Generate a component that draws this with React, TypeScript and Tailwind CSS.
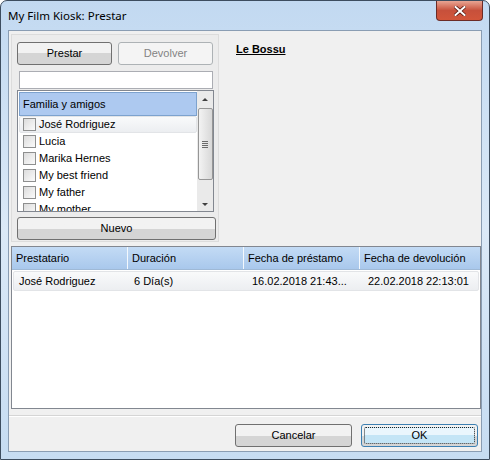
import React from 'react';

const friends = ['José Rodriguez', 'Lucia', 'Marika Hernes', 'My best friend', 'My father', 'My mother'];

const columns = [
  { label: 'Prestatario', w: 'w-[116px]' },
  { label: 'Duración', w: 'w-[116px]' },
  { label: 'Fecha de préstamo', w: 'w-[116px]' },
  { label: 'Fecha de devolución', w: 'flex-1' },
];

// Botón estilo Windows 7
function WinButton({ label, disabled, focused, className }: { label: string; disabled?: boolean; focused?: boolean; className: string }) {
  if (disabled) {
    return (
      <div className={`${className} flex items-center justify-center rounded-[3px] border border-[#adb2b5] bg-[#f4f4f4] text-[#838383]`}>
        {label}
      </div>
    );
  }
  return (
    <div
      className={`${className} flex items-center justify-center rounded-[3px] border ${
        focused ? 'border-[#3c7fb1]' : 'border-[#707070]'
      } bg-gradient-to-b from-[#f2f2f2] from-50% to-[#d5d5d5] to-50% text-black`}
    >
      {focused ? (
        <div className="m-[2px] flex h-[calc(100%-4px)] w-[calc(100%-4px)] items-center justify-center rounded-[2px] border border-dotted border-[#222] bg-gradient-to-b from-[#eaf6fd] from-50% to-[#c4e5f6] to-50%">
          {label}
        </div>
      ) : (
        label
      )}
    </div>
  );
}

function Check() {
  return <div className="h-[13px] w-[13px] shrink-0 border border-[#8e8f8f] bg-gradient-to-br from-[#dcdcdc] to-[#fbfbfb]" />;
}

export default function App() {
  return (
    <div
      className="relative h-[460px] w-[490px] overflow-hidden rounded-t-[7px] border border-[#3d4d5f] bg-gradient-to-b from-[#c2d9f1] via-[#dbe9f7] to-[#c6dcf2] text-[11px] whitespace-nowrap"
      style={{ fontFamily: '"Liberation Sans", Arial, sans-serif' }}
    >
      {/* barra de título */}
      <div className="flex h-[29px] items-center pl-[7px]">
        <span className="text-[11.5px] text-black" style={{ fontFamily: '"Noto Sans", "Liberation Sans", sans-serif' }}>
          My Film Kiosk: Prestar
        </span>
      </div>
      <div className="absolute right-[6px] top-0 flex h-[20px] w-[47px] items-center justify-center rounded-b-[4px] border border-t-0 border-[#6b2b26] bg-gradient-to-b from-[#e8a493] via-[#c7503b] to-[#d2553a]">
        <svg width="12" height="10" viewBox="0 0 12 10">
          <path d="M1.5 1 L10.5 9 M10.5 1 L1.5 9" stroke="#5a1a12" strokeWidth="3.6" strokeLinecap="square" />
          <path d="M1.5 1 L10.5 9 M10.5 1 L1.5 9" stroke="#fff" strokeWidth="2" strokeLinecap="square" />
        </svg>
      </div>

      {/* área cliente */}
      <div className="mx-[7px] flex h-[422px] flex-col border border-[#8a9db3] bg-[#f0f0f0] pt-[3px]">
        <div className="flex">
          {/* panel izquierdo */}
          <div className="ml-[2px] flex h-[208px] w-[208px] flex-col border border-[#dcdcdc] bg-[#ececec] px-[5px] pt-[7px]">
            <div className="flex gap-[6px]">
              <WinButton label="Prestar" className="h-[23px] w-[96px]" />
              <WinButton label="Devolver" disabled className="h-[23px] w-[96px]" />
            </div>
            <div className="ml-[2px] mt-[6px] h-[18px] w-[194px] border border-[#abadb3] bg-white" />
            <div className="mt-[1px] flex h-[122px] w-[197px] border border-[#828790] bg-white">
              <div className="flex flex-1 flex-col overflow-hidden pl-[1px] pt-[1px]">
                <div className="flex h-[24px] w-[178px] shrink-0 items-center border border-[#7da2ce] bg-[#adc9f0] pl-[3px] text-black">
                  Familia y amigos
                </div>
                {friends.map((f, i) => (
                  <div
                    key={f}
                    className={`flex h-[17px] w-[178px] shrink-0 items-center gap-[3px] pl-[3px] ${
                      i === 0 ? 'rounded-[2px] border border-[#e2e4e7] bg-gradient-to-b from-[#f9fafb] to-[#eceef1]' : 'border border-transparent'
                    }`}
                  >
                    <Check />
                    <span>{f}</span>
                  </div>
                ))}
              </div>
              {/* barra de desplazamiento */}
              <div className="flex w-[16px] flex-col items-center bg-[#eaeaea]">
                <div className="flex h-[17px] items-center justify-center">
                  <div className="h-0 w-0 border-x-[3px] border-b-[3px] border-x-transparent border-b-[#404040]" />
                </div>
                <div className="flex h-[72px] w-[15px] items-center justify-center rounded-[2px] border border-[#969696] bg-gradient-to-r from-[#f3f3f3] to-[#d8d8d8]">
                  <div className="flex flex-col gap-[1px]">
                    <div className="h-[1px] w-[6px] bg-[#6a6a6a]" />
                    <div className="h-[1px] w-[6px] bg-[#6a6a6a]" />
                    <div className="h-[1px] w-[6px] bg-[#6a6a6a]" />
                    <div className="h-[1px] w-[6px] bg-[#6a6a6a]" />
                  </div>
                </div>
                <div className="flex-1" />
                <div className="flex h-[14px] items-center justify-center">
                  <div className="h-0 w-0 border-x-[3px] border-t-[3px] border-x-transparent border-t-[#404040]" />
                </div>
              </div>
            </div>
            <WinButton label="Nuevo" className="mt-[5px] h-[23px] w-[199px]" />
          </div>
          {/* título de la película */}
          <div className="pl-[17px] pt-[7px]">
            <span className="font-bold underline">Le Bossu</span>
          </div>
        </div>

        {/* tabla de préstamos */}
        <div className="ml-[2px] mt-[4px] h-[163px] w-[470px] border border-[#828790] bg-white">
          <div className="flex h-[23px] border-b border-[#9fb9d6] bg-gradient-to-b from-[#c3dbf5] to-[#a9c8ec]">
            {columns.map((c, i) => (
              <div
                key={c.label}
                className={`${c.w} flex items-center pl-[4px] ${i < 3 ? 'border-r border-[#f3f8fd]' : ''}`}
              >
                {c.label}
              </div>
            ))}
          </div>
          <div className="mx-[1px] mt-[1px] flex h-[20px] items-center rounded-[2px] border border-[#e2e4e7] bg-gradient-to-b from-[#f9fafb] to-[#eceef1]">
            <div className="w-[116px] pl-[5px]">José Rodriguez</div>
            <div className="w-[116px] pl-[4px]">6 Día(s)</div>
            <div className="w-[116px] pl-[6px]">16.02.2018 21:43...</div>
            <div className="flex-1 pl-[6px]">22.02.2018 22:13:01</div>
          </div>
        </div>

        <div className="mt-[6px] h-[2px] border-t border-b border-t-[#d5d5d5] border-b-white" />

        {/* botones inferiores */}
        <div className="mt-[7px] flex justify-end gap-[9px] pr-[3px]">
          <WinButton label="Cancelar" className="h-[23px] w-[117px]" />
          <WinButton label="OK" focused className="h-[23px] w-[117px]" />
        </div>
      </div>
    </div>
  );
}
